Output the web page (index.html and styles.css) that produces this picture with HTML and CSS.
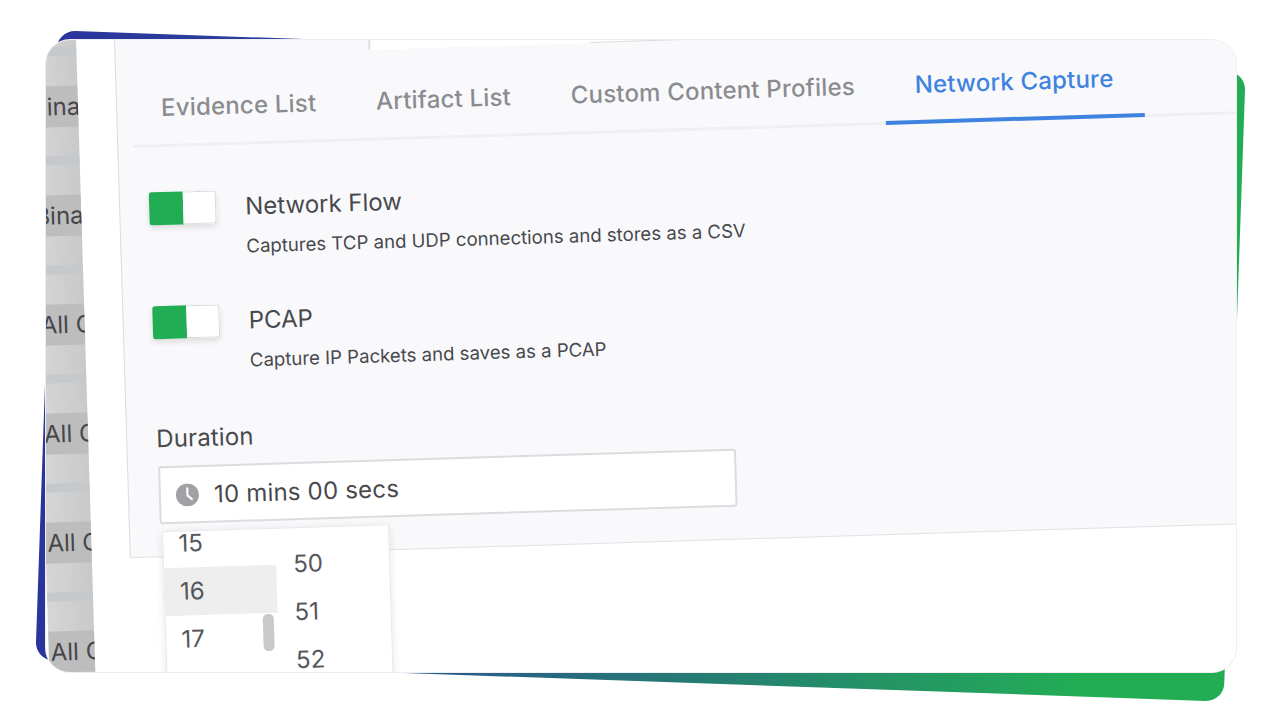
FILE: index.html
```html
<!DOCTYPE html>
<html lang="en">
<head>
<meta charset="utf-8">
<title>Network Capture</title>
<link rel="stylesheet" href="styles.css">
</head>
<body>
<div class="stage">
  <div class="backdrop"></div>
  <div class="card">
    <div class="scene">
      <aside class="sidebar">
        <div class="row"><div class="stripe"></div><div class="cell">Binary</div></div>
        <div class="row"><div class="stripe"></div><div class="cell">Binary</div></div>
        <div class="row"><div class="stripe"></div><div class="cell pad">All Clients</div></div>
        <div class="row"><div class="stripe"></div><div class="cell pad">All Clients</div></div>
        <div class="row"><div class="stripe"></div><div class="cell pad">All Clients</div></div>
        <div class="row"><div class="stripe"></div><div class="cell pad">All Clients</div></div>
      </aside>
      <main class="main">
        <div class="upper">
          <div class="upper-active"></div>
          <div class="upper-idle"></div>
          <div class="upper-rest"></div>
        </div>
        <section class="panel">
          <nav class="tabs">
            <span class="tab">Evidence List</span>
            <span class="tab">Artifact List</span>
            <span class="tab">Custom Content Profiles</span>
            <span class="tab active">Network Capture</span>
          </nav>
          <div class="body">
            <div class="option">
              <div class="toggle"><span class="on"></span><span class="off"></span></div>
              <div class="option-text">
                <div class="label">Network Flow</div>
                <div class="desc">Captures TCP and UDP connections and stores as a CSV</div>
              </div>
            </div>
            <div class="option">
              <div class="toggle"><span class="on"></span><span class="off"></span></div>
              <div class="option-text">
                <div class="label">PCAP</div>
                <div class="desc">Capture IP Packets and saves as a PCAP</div>
              </div>
            </div>
            <div class="duration">
              <div class="label">Duration</div>
              <div class="input">
                <svg class="clock" viewBox="0 0 24 24" aria-hidden="true">
                  <circle cx="12" cy="12" r="12" fill="#9fa1a4"/>
                  <path d="M12 5v7.5l4.5 4" fill="none" stroke="#fff" stroke-width="2.2" stroke-linecap="round" stroke-linejoin="round"/>
                </svg>
                <span>10 mins 00 secs</span>
              </div>
              <div class="dropdown">
                <div class="col first">
                  <div class="item">15</div>
                  <div class="item current">16</div>
                  <div class="item">17</div>
                  <div class="item">18</div>
                </div>
                <div class="scrollbar"></div>
                <div class="col second">
                  <div class="item">50</div>
                  <div class="item">51</div>
                  <div class="item">52</div>
                </div>
              </div>
            </div>
          </div>
        </section>
      </main>
    </div>
  </div>
</div>
</body>
</html>
```
FILE: styles.css
```css
* { box-sizing: border-box; }
html, body { margin: 0; height: 100%; background: #fff; overflow: hidden; }
body { font-family: Inter, "Noto Sans", sans-serif; color: #48494d; }

.stage { position: relative; width: 1280px; height: 720px; padding: 40px 44px 48px 46px; }

.backdrop {
  position: absolute;
  left: 46px;
  top: 51px;
  width: 1189px;
  height: 630px;
  border-radius: 18px;
  transform: rotate(2deg);
  background: linear-gradient(90deg, #2a359c 0%, #2a3f9a 16%, #22ad55 88%);
}

.card {
  position: relative;
  width: 1190px;
  height: 632px;
  background: #fff;
  border-radius: 24px;
  overflow: hidden;
  box-shadow: 0 0 0 1px #eeeef0;
}

.scene {
  display: flex;
  width: 1400px;
  height: 800px;
  margin-left: -16px;
  transform: rotate(-1.75deg);
  transform-origin: 0 0;
}

.sidebar {
  flex: none;
  width: 46px;
  height: 760px;
  overflow: hidden;
  background: linear-gradient(90deg, #d6d6d6, #c9c9c9);
  font-size: 24px;
  padding-top: 8px;
  color: #45464a;
}
.row { height: 109px; white-space: nowrap; }
.stripe { height: 9px; margin-bottom: 30px; background: #c6c9cc; }
.cell { height: 41px; line-height: 41px; padding-left: 0; margin-left: -1px; background: #bdbdbd; }
.cell.pad { margin-left: 0; padding-left: 2px; }

.main { flex: none; width: 1300px; margin-left: 38px; }

.upper { display: flex; height: 20px; }
.upper-active { width: 254px; background: #f9f9fc; border-left: 1px solid #dcdcdf; }
.upper-idle { width: 222px; background: #fff; border-left: 2px solid #dedee0; }
.upper-rest { flex: 1; border-bottom: 1px solid #dcdcdf; }

.panel {
  height: 501px;
  background: #f9f9fc;
  border-left: 1px solid #dcdcdf;
  border-bottom: 1px solid #e2e2e5;
  padding-left: 15px;
}

.tabs {
  display: flex;
  height: 91px;
  padding-top: 37px;
  border-bottom: 3px solid #f0f0f2;
  font-size: 24px;
  font-weight: 500;
  letter-spacing: .2px;
  line-height: 29px;
  color: #8b8c90;
}
.tab { height: 54px; padding: 0 29.9px; }
.tab:first-child { margin-left: -1px; }
.tab.active { color: #3f83e0; border-bottom: 4px solid #3f83e0; }

.body { padding: 45px 0 0 14px; }

.option { display: flex; gap: 29px; height: 114px; }
.toggle {
  display: flex;
  width: 67px;
  height: 33px;
  border-radius: 3px;
  box-shadow: 0 3px 6px rgba(0, 0, 0, .12);
}
.on { width: 34px; background: #22ad55; border-radius: 3px 0 0 3px; }
.off { width: 33px; background: #fff; border: 1px solid #d8d8da; border-left: 0; border-radius: 0 3px 3px 0; }

.option-text { padding-top: 1px; }
.label { font-size: 24px; line-height: 32px; color: #48494d; }
.desc { margin-top: 11px; font-size: 18.6px; line-height: 24px; color: #48494d; }

.duration { position: relative; margin-top: 3px; }
.duration .label { letter-spacing: .15px; }
.input {
  display: flex;
  align-items: center;
  gap: 15px;
  width: 578px;
  height: 58px;
  margin: 11px 0 0 1px;
  padding-left: 15px;
  background: #fff;
  border: 2px solid #dcdcdf;
  border-radius: 3px;
  font-size: 24px;
  letter-spacing: .2px;
}
.clock { width: 23px; height: 23px; flex: none; }

.dropdown {
  position: absolute;
  left: 3px;
  top: 108px;
  display: flex;
  width: 227px;
  height: 300px;
  overflow: hidden;
  background: #fff;
  border: 1px solid #e8e8ea;
  box-shadow: 0 2px 8px rgba(0, 0, 0, .1);
  font-size: 24px;
  color: #55565a;
}
.col { flex: none; }
.first { width: 112px; margin-top: -12px; }
.second { padding: 12px 0 0 17px; }
.item { height: 48px; line-height: 48px; }
.first .item { padding-left: 15px; }
.current { background: #eeeeef; }
.scrollbar {
  position: absolute;
  left: 97px;
  top: 85px;
  width: 11px;
  height: 37px;
  border-radius: 5px;
  background: #c9c9cb;
}
```
